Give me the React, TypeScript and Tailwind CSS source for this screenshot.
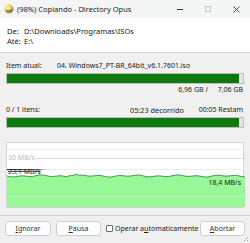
export default function App() {
  const wave: string[] = [];
  for (let x = 0; x <= 238; x += 2) {
    const y = 33 + Math.sin(x / 3.1) * 0.6 + Math.sin(x / 7.3) * 0.5 + (x > 60 && x < 72 ? -1.2 : 0);
    wave.push(`${x},${y.toFixed(2)}`);
  }
  const poly = `0,66 ${wave.join(" ")} 238,66`;
  return (
    <div className="w-[250px] h-[243px] bg-[#f0f0f0] flex flex-col text-[7px] leading-[10px] text-[#202020] overflow-hidden relative font-['Noto_Sans',sans-serif]">
      {/* title bar */}
      <div className="h-[18px] bg-[#f4f6f6] flex items-center pl-[4px]">
        <svg width="10" height="10" viewBox="0 0 10 10" className="shrink-0">
          <defs>
            <radialGradient id="g" cx="0.35" cy="0.35" r="0.7">
              <stop offset="0" stopColor="#fff6c0" />
              <stop offset="0.6" stopColor="#f2c530" />
              <stop offset="1" stopColor="#b47a10" />
            </radialGradient>
          </defs>
          <circle cx="5" cy="5" r="4.5" fill="url(#g)" />
          <path d="M2 6.5 Q5 8.5 8.5 5.5" stroke="#4a6fb5" strokeWidth="1.4" fill="none" />
        </svg>
        <span className="ml-[3px] text-[7.5px] text-[#1a1a1a]">(98%) Copiando - Directory Opus</span>
        <div className="ml-auto flex h-full">
          <div className="w-[28px] h-full flex items-center justify-center">
            <div className="w-[6px] h-px bg-[#333]" />
          </div>
          <div className="w-[28px] h-full flex items-center justify-center">
            <div className="w-[6px] h-[6px] border border-[#c8c8c8]" />
          </div>
          <div className="w-[28px] h-full flex items-center justify-center">
            <svg width="7" height="7" viewBox="0 0 7 7">
              <path d="M0.5 0.5 L6.5 6.5 M6.5 0.5 L0.5 6.5" stroke="#333" strokeWidth="0.9" />
            </svg>
          </div>
        </div>
      </div>
      {/* top panel */}
      <div className="h-[35px] bg-white border-b border-[#d6d6d6] pt-[8px] pl-[7px] text-[7.5px]">
        <div className="flex">
          <span className="w-[17px]">De:</span>
          <span>D:\Downloads\Programas\ISOs</span>
        </div>
        <div className="flex">
          <span className="w-[17px]">Até:</span>
          <span>E:\</span>
        </div>
      </div>
      {/* content */}
      <div className="px-[6px] flex flex-col">
        <div className="flex mt-[8px]">
          <span className="w-[51px]">Item atual:</span>
          <span>04. Windows7_PT-BR_64bit_v6.1.7601.iso</span>
        </div>
        <div className="mt-[2px] h-[11px] border border-[#bcbcbc] bg-[#e6e6e6] flex">
          <div className="w-[98.5%] h-full bg-[#0e7a0e]" />
        </div>
        <div className="mt-[1px] flex justify-end pr-[1px]">
          <span>6,96 GB /</span>
          <span className="w-[35px] text-right">7,06 GB</span>
        </div>
        <div className="mt-[10px] flex pr-[1px]">
          <span className="w-[124px]">0 / 1 itens:</span>
          <span className="text-[7.3px]">05:23 decorrido</span>
          <span className="ml-auto">00:05 Restam</span>
        </div>
        <div className="mt-[2px] h-[11px] border border-[#bcbcbc] bg-[#e6e6e6] flex">
          <div className="w-[98.5%] h-full bg-[#0e7a0e]" />
        </div>
        {/* graph */}
        <div className="mt-[14px] h-[66px] border border-[#d4d4d4] bg-white relative">
          <svg width="238" height="64" viewBox="0 0 238 64" className="block">
            <defs>
              <linearGradient id="fade" x1="0" x2="1" y1="0" y2="0">
                <stop offset="0" stopColor="#2a2a2a" />
                <stop offset="0.7" stopColor="#6a6a6a" />
                <stop offset="1" stopColor="#ffffff" stopOpacity="0" />
              </linearGradient>
            </defs>
            <line x1="0" y1="6.5" x2="238" y2="6.5" stroke="#f0f0f0" strokeWidth="1" />
            <line x1="28" y1="15.5" x2="238" y2="15.5" stroke="#dcdcdc" strokeWidth="1" />
            <line x1="0" y1="26.5" x2="238" y2="26.5" stroke="#eeeeee" strokeWidth="1" />
            <rect x="0" y="26" width="45" height="1.2" fill="url(#fade)" />
            <polygon points={poly} fill="#98f898" />
            <polyline points={wave.join(" ")} fill="none" stroke="#3d8a50" strokeWidth="0.9" />
            <line x1="0" y1="53.5" x2="238" y2="53.5" stroke="#b4fab4" strokeWidth="1" />
          </svg>
          <span className="absolute left-[1px] top-[10px] text-[#b8b8b8]">30 MB/s</span>
          <span className="absolute left-[1px] top-[24px] text-[#303030] line-through decoration-[#505050]">23,1 MB/s</span>
          <span className="absolute right-[2px] top-[35px] text-[#202020]">18,4 MB/s</span>
        </div>
      </div>
      <div className="mt-[7px] h-px bg-[#d4d4d4]" />
      <div className="mt-[5px] flex items-center px-[5px]">
        <button className="w-[46px] h-[15px] bg-[#fdfdfd] border border-[#d0d0d0] rounded-[3px] text-[#303030]">
          <span className="underline">I</span>gnorar
        </button>
        <button className="ml-[5px] w-[45px] h-[15px] bg-[#fdfdfd] border border-[#d0d0d0] rounded-[3px] text-[#303030]">
          <span className="underline">P</span>ausa
        </button>
        <div className="ml-[5px] flex items-center">
          <div className="w-[7px] h-[7px] border border-[#6a6a6a] rounded-[1px] bg-white" />
          <span className="ml-[2px]">Operar a<span className="underline">u</span>tomaticamente</span>
        </div>
        <button className="ml-auto w-[45px] h-[15px] bg-[#fdfdfd] border border-[#d0d0d0] rounded-[3px] text-[#303030]">
          <span className="underline">A</span>bortar
        </button>
      </div>
      <svg width="5" height="5" viewBox="0 0 5 5" className="absolute right-[1px] bottom-[1px]">
        <rect x="3" y="0" width="1" height="1" fill="#a0a0a0" />
        <rect x="3" y="3" width="1" height="1" fill="#a0a0a0" />
        <rect x="0" y="3" width="1" height="1" fill="#a0a0a0" />
        <rect x="1.5" y="1.5" width="1" height="1" fill="#a0a0a0" />
      </svg>
    </div>
  );
}
